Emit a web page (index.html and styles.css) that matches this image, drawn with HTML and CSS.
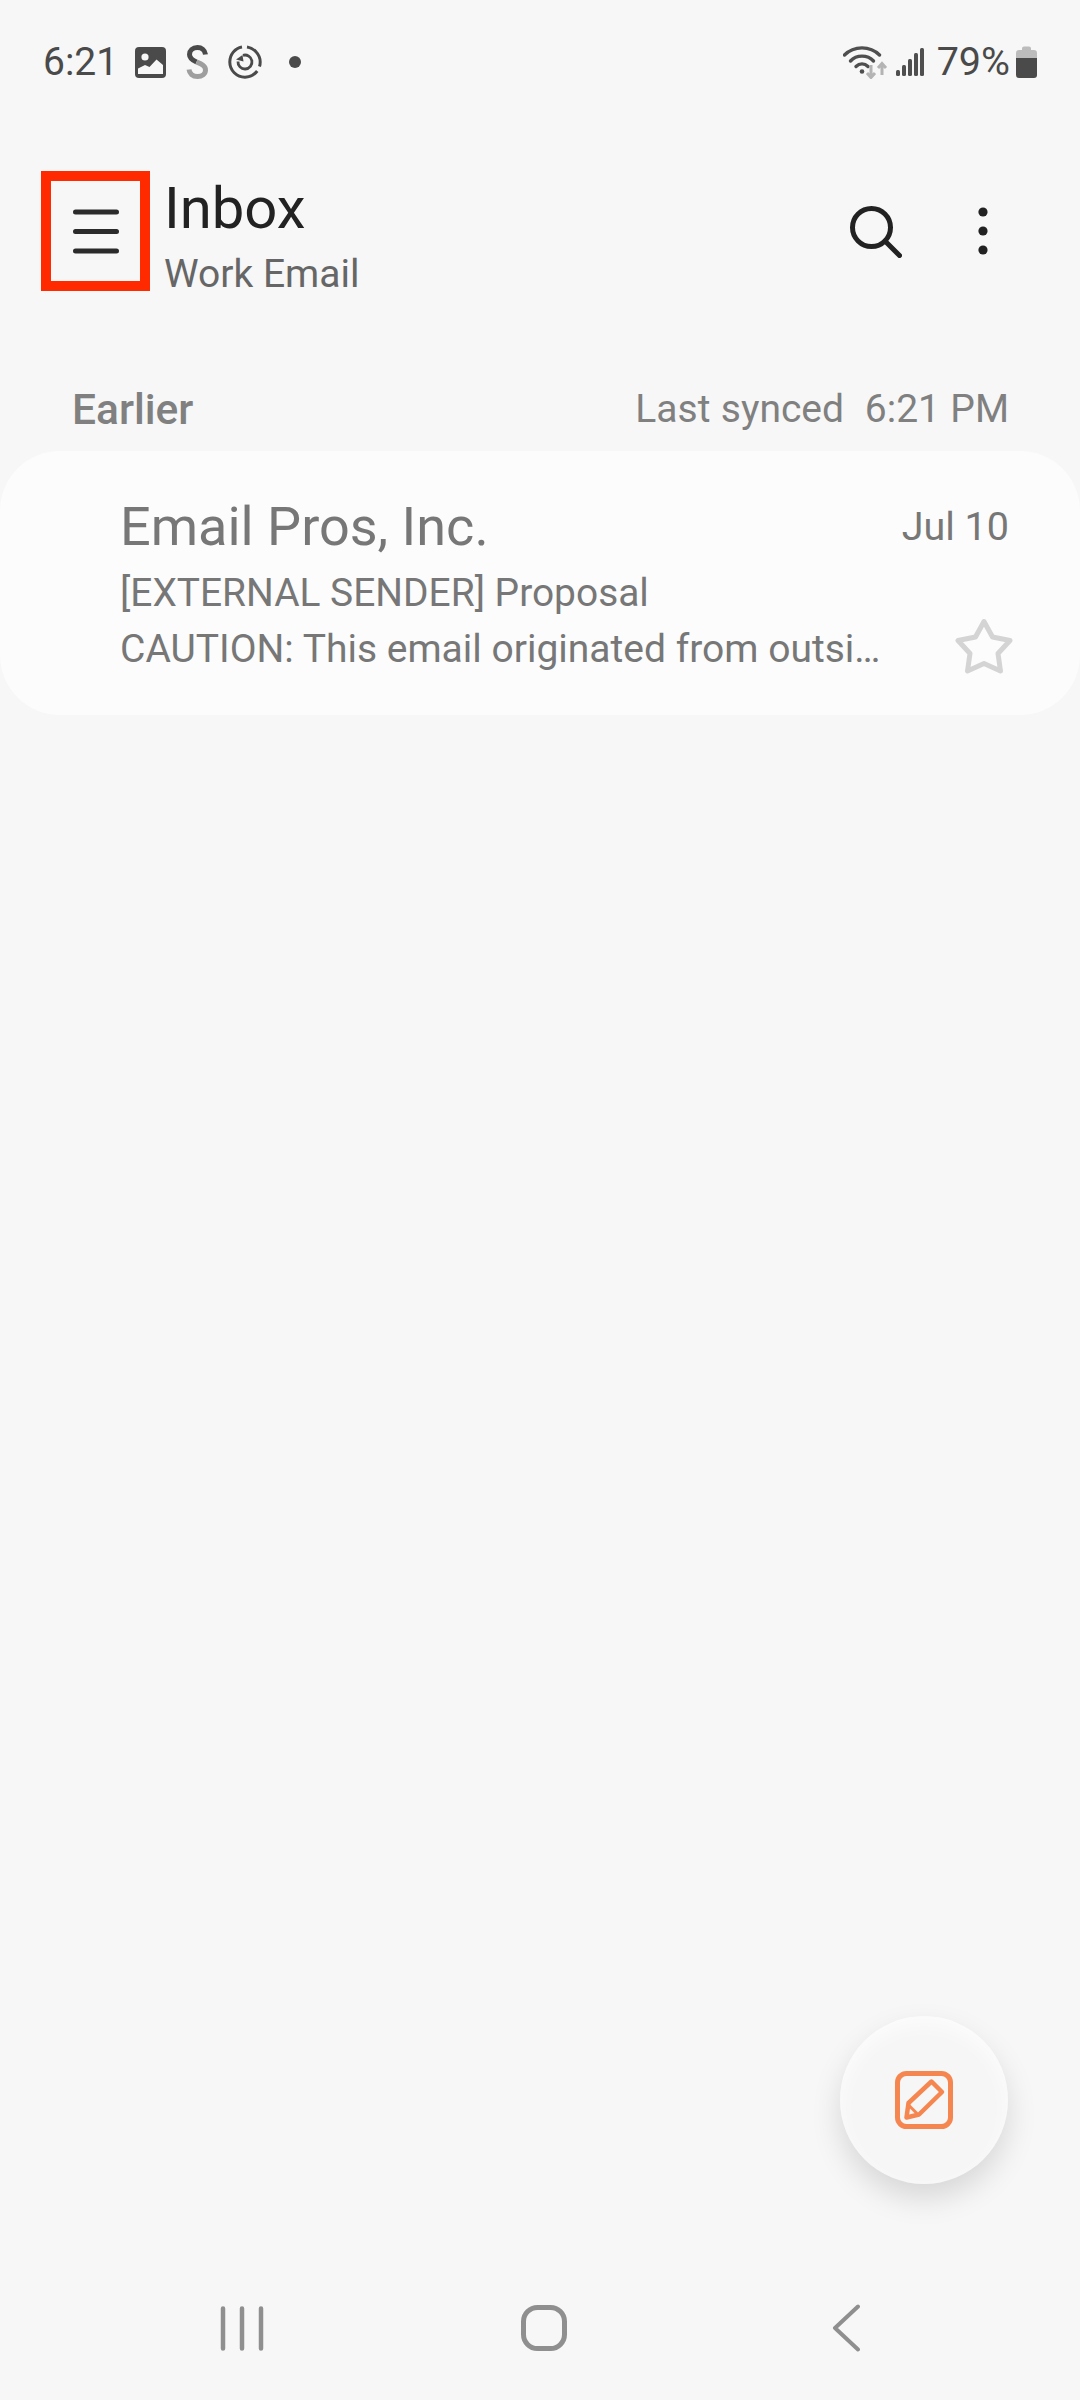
FILE: index.html
```html
<!DOCTYPE html>
<html lang="en">
<head>
<meta charset="utf-8">
<title>Inbox</title>
<link rel="stylesheet" href="styles.css">
</head>
<body>
<div class="app">
  <div class="status">
    <div class="status-left">
      <span class="clock">6:21</span>
      <svg class="ic-img" width="31" height="31" viewBox="0 0 31 31"><rect width="31" height="31" rx="4" fill="#4a4a4a"/><circle cx="10" cy="10" r="3.600" fill="#f7f7f7"/><path d="M3 27v-5.500l7-3.500 4.500 2 7-7.500 6.500 5.500v9z" fill="#f7f7f7"/></svg>
      <svg class="ic-s" width="22" height="34" viewBox="0 0 22 34" fill="none" stroke-width="5"><path d="M19.500 9.500C19 5 15.500 2.500 11.500 2.500 6.500 2.500 3.500 5.500 3.500 9.500c0 3.500 2.500 5.500 7 7.500" stroke="#4a4a4a"/><path d="M10.500 17c5 2 9 3.500 9 8 0 4-3.500 6.500-8 6.500-5 0-8-3-8.500-7" stroke="#9e9e9e"/></svg>
      <svg class="ic-sync" width="34" height="34" viewBox="0 0 34 34" fill="none" stroke="#4a4a4a" stroke-width="3"><path d="M14 2C7 3.200 1.800 9.500 1.800 17c0 8.400 6.800 15.200 15.200 15.200 5 0 9.500-2.500 12.200-6.200"/><path d="M19 2c3.600.5 6.900 2.400 9.200 5 2.500 2.700 4 6.200 4 10 0 1.500-.2 3-.7 4.500"/><path d="M15 10.300a7 7 0 1 1-5 6.200" stroke-width="2.800"/><path d="M8 14.500l6.500-4.500 1 6.500z" fill="#4a4a4a" stroke="none"/></svg>
      <span class="dot"></span>
    </div>
    <div class="status-right">
      <svg class="ic-wifi" width="46" height="33" viewBox="0 0 46 33" fill="none"><path d="M1.500 9C11 -.5 27-.5 36.500 9" stroke="#4f4f4f" stroke-width="3.400" stroke-linecap="round"/><path d="M7.500 15C13.500 8.500 24.500 8.500 30.500 15" stroke="#4f4f4f" stroke-width="3.400" stroke-linecap="round"/><path d="M13 20.500c3.500-3.500 8.500-3.500 12 0" stroke="#4f4f4f" stroke-width="3.400" stroke-linecap="round"/><circle cx="19" cy="25.500" r="2.300" fill="#4f4f4f"/><path d="M28 19v12M24 27l4 4.500 4-4.500M39 29V18M35 22l4-4.500 4 4.500" stroke="#b4b4b4" stroke-width="3"/></svg>
      <svg class="ic-signal" width="28" height="28" viewBox="0 0 28 28" fill="#4f4f4f"><rect x="0" y="22" width="4" height="6" rx="1.500"/><rect x="6" y="17" width="4" height="11" rx="1.500"/><rect x="12" y="11" width="4" height="17" rx="1.500"/><rect x="18" y="5" width="4" height="23" rx="1.500"/><rect x="24" y="0" width="4" height="28" rx="1.500"/></svg>
      <span class="battery-text">79%</span>
      <svg class="ic-bat" width="21" height="32" viewBox="0 0 21 32"><path d="M6 4V2.500A2 2 0 0 1 8 .5h5a2 2 0 0 1 2 2V4h3a3 3 0 0 1 3 3v5H0V7a3 3 0 0 1 3-3z" fill="#bcbcbc"/><path d="M0 12h21v17a3 3 0 0 1-3 3H3a3 3 0 0 1-3-3z" fill="#4a4a4a"/></svg>
    </div>
  </div>

  <header class="appbar">
    <div class="menu-box">
      <svg width="46" height="45" viewBox="0 0 46 45" stroke="#2b2b2b" stroke-width="5" stroke-linecap="round"><path d="M2.500 3h41M2.500 22.500h41M2.500 42h41"/></svg>
    </div>
    <div class="titles">
      <div class="title">Inbox</div>
      <div class="subtitle">Work Email</div>
    </div>
    <svg class="act-search" width="52" height="52" viewBox="0 0 52 52" fill="none" stroke="#222" stroke-width="5" stroke-linecap="round"><circle cx="21.500" cy="21.500" r="19"/><path d="M35 35l14.500 14.500"/></svg>
    <svg class="act-more" width="10" height="48" viewBox="0 0 10 48" fill="#222"><circle cx="5" cy="5" r="4.600"/><circle cx="5" cy="24" r="4.600"/><circle cx="5" cy="43" r="4.600"/></svg>
  </header>

  <div class="section">
    <span class="section-name">Earlier</span>
    <span class="sync">Last synced&nbsp; 6:21 PM</span>
  </div>

  <article class="card">
    <div class="card-top">
      <span class="sender">Email Pros, Inc.</span>
      <span class="date">Jul 10</span>
    </div>
    <div class="subject">[EXTERNAL SENDER] Proposal</div>
    <div class="card-bottom">
      <span class="preview">CAUTION: This email originated from outsi…</span>
      <svg class="star" width="58" height="58" viewBox="0 0 58 58" fill="none" stroke="#d4d4d4" stroke-width="5" stroke-linejoin="round"><path d="M29 3.500l8.500 15.500 17.500 3.500-12 13 2.500 17.500L29 45.500l-16.500 7.500L15 35.500 3 22.500 20.500 19z"/></svg>
    </div>
  </article>

  <div class="fill"></div>

  <nav class="navbar">
    <svg width="44" height="45" viewBox="0 0 44 45" stroke="#8f8f8f" stroke-width="4.500" stroke-linecap="round"><path d="M3 2.500v40M22 2.500v40M41 2.500v40"/></svg>
    <svg class="nav-home" width="46" height="46" viewBox="0 0 46 46" fill="none" stroke="#8f8f8f" stroke-width="5"><rect x="2.500" y="2.500" width="41" height="41" rx="14"/></svg>
    <svg width="28" height="48" viewBox="0 0 28 48" fill="none" stroke="#8f8f8f" stroke-width="4" stroke-linecap="round" stroke-linejoin="round"><path d="M26 2.500L3 24l23 21.500"/></svg>
  </nav>

  <button class="fab" type="button" aria-label="Compose">
    <svg width="58" height="58" viewBox="0 0 58 58" fill="none" stroke="#f5864f" stroke-width="5" stroke-linejoin="round"><rect x="2.500" y="2.500" width="53" height="53" rx="9"/><path d="M13.500 32L36.500 10.500 47 21 24 43.500l-12.500 3z" stroke-width="4.500"/><path d="M14 34.500l8 8" stroke-width="3"/></svg>
  </button>
</div>
</body>
</html>
```
FILE: styles.css
```css
* { box-sizing: border-box; }
html, body { margin: 0; padding: 0; }
body { background: #f7f7f7; font-family: Roboto, "Liberation Sans", sans-serif; }
.app { position: relative; width: 1080px; height: 2400px; overflow: hidden; display: flex; flex-direction: column; background: #f7f7f7; }
svg { display: block; flex: none; }

.status { height: 124px; display: flex; justify-content: space-between; align-items: center; padding: 0 43px 0 43px; color: #4a4a4a; }
.status-left, .status-right { display: flex; align-items: center; }
.clock { font-size: 39px; width: 92px; line-height: 44px; }
.ic-s { margin-left: 20px; }
.ic-sync { margin-left: 20px; }
.dot { width: 12px; height: 12px; border-radius: 50%; background: #4a4a4a; margin-left: 27px; }
.ic-signal { margin-left: 7px; }
.battery-text { font-size: 39.500px; line-height: 44px; margin-left: 13px; }
.ic-bat { margin-left: 6px; }

.appbar { height: 120px; margin-top: 47px; display: flex; align-items: center; padding-left: 41px; }
.menu-box { width: 109px; height: 120px; border: 10px solid #ff2a00; display: flex; align-items: center; justify-content: center; }
.titles { margin-left: 14px; flex: 1; align-self: stretch; display: flex; flex-direction: column; }
.title { font-size: 58px; line-height: 68px; margin-top: 3px; color: #222; }
.subtitle { font-size: 39px; line-height: 46px; margin-top: 9px; color: #666; }
.act-search { margin-right: 76px; margin-top: 1px; }
.act-more { margin-right: 92px; }

.section { margin-top: 80px; height: 76px; display: flex; justify-content: space-between; align-items: center; padding: 0 71px 0 72px; color: #808080; }
.section-name { font-size: 42.500px; font-weight: 500; }
.sync { font-size: 39px; word-spacing: 0.700px; }

.card { margin-top: 4px; height: 264px; background: #fcfcfc; border-radius: 60px; padding: 44px 71px 0 120px; color: #777; }
.card-top { display: flex; justify-content: space-between; align-items: center; height: 62px; }
.sender { font-size: 54px; }
.date { font-size: 39.500px; }
.subject { font-size: 38.900px; line-height: 56px; margin-top: 8px; }
.card-bottom { position: relative; line-height: 56px; font-size: 39px; }
.preview { display: block; }
.star { position: absolute; right: -4px; top: -3px; }

.fill { flex: 1; }
.navbar { height: 100px; margin-bottom: 22px; display: flex; align-items: center; justify-content: space-between; padding: 0 220px; }
.nav-home { margin-right: 8px; }

.fab { position: absolute; left: 840px; top: 2016px; width: 168px; height: 168px; padding: 0; border: 0; border-radius: 50%; background: #f6f6f6; box-shadow: 0 14px 30px rgba(0,0,0,.13), inset 0 8px 20px rgba(255,255,255,.7); display: flex; align-items: center; justify-content: center; }
```
